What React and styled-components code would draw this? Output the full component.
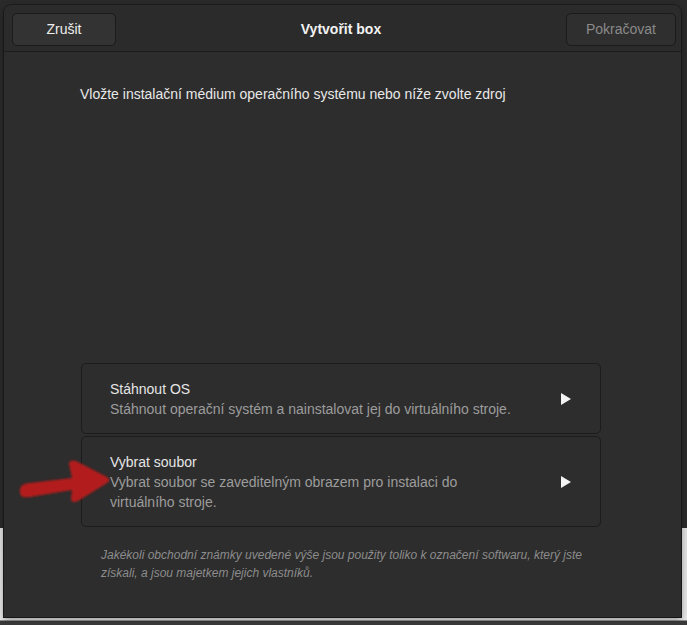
import React from "react";
import styled, { createGlobalStyle } from "styled-components";

const GlobalStyle = createGlobalStyle`
  html, body {
    margin: 0;
    padding: 0;
  }
  body {
    width: 687px;
    height: 625px;
    overflow: hidden;
    font-family: "Liberation Sans", Arial, sans-serif;
    background: linear-gradient(to bottom, #2a2a2a 0, #2a2a2a 528px, #dedede 528px, #e4e4e4 620px, #3a3a3a 621px);
  }
`;

const Dialog = styled.div`
  position: relative;
  margin: 5px 0 0 4px;
  width: 677px;
  height: 612px;
  display: flex;
  flex-direction: column;
  background: #2d2d2d;
  border-radius: 8px 8px 0 0;
  box-shadow: 0 2px 6px rgba(0, 0, 0, 0.4), 0 0 0 1px #1e1e1e;
  overflow: hidden;
`;

const HeaderBar = styled.div`
  height: 46px;
  flex-shrink: 0;
  display: flex;
  align-items: center;
  justify-content: space-between;
  padding: 0 5px 0 8px;
  background: #2b2b2b;
  border-bottom: 1px solid #1c1c1c;
`;

const HeaderButton = styled.button`
  height: 33px;
  width: ${(p) => p.$width}px;
  margin-top: 2px;
  border: 1px solid #1b1b1b;
  border-radius: 5px;
  background: ${(p) => (p.$disabled ? "#2f2f2f" : "#333333")};
  color: ${(p) => (p.$disabled ? "#8a8a8a" : "#eeeeee")};
  font-family: inherit;
  font-size: 14px;
  cursor: pointer;
`;

const Title = styled.div`
  color: #f2f2f2;
  font-weight: bold;
  font-size: 14px;
  margin-top: 2px;
`;

const Content = styled.div`
  flex: 1;
  display: flex;
  flex-direction: column;
  padding: 32px 0 35px 76px;
`;

const Intro = styled.p`
  margin: 0;
  color: #e8e8e8;
  font-size: 14px;
  line-height: 20px;
`;

const SourceList = styled.div`
  margin-top: auto;
  margin-left: 1px;
  width: 520px;
  display: flex;
  flex-direction: column;
  gap: 2px;
`;

const SourceCard = styled.div`
  display: flex;
  align-items: center;
  padding: 15px 29px 14px 28px;
  border: 1px solid #1c1c1c;
  border-radius: 5px;
  background: #2d2d2d;
`;

const CardText = styled.div`
  flex: 1;
  max-width: 408px;
`;

const CardTitle = styled.div`
  color: #e6e6e6;
  font-size: 14px;
  font-weight: normal;
  line-height: 20px;
`;

const CardSubtitle = styled.div`
  color: #9c9c9c;
  font-size: 14px;
  line-height: 20px;
`;

const Play = styled.div`
  margin-left: auto;
  width: 0;
  height: 0;
  border-top: 6px solid transparent;
  border-bottom: 6px solid transparent;
  border-left: 10px solid #f4f4f4;
`;

const Footer = styled.p`
  margin: 19px 0 0 21px;
  width: 495px;
  color: #8c8c8c;
  font-style: italic;
  font-size: 12px;
  line-height: 18px;
`;

const Annotation = styled.svg`
  position: absolute;
  left: 12px;
  top: 450px;
  pointer-events: none;
`;

const sources = [
  {
    title: "Stáhnout OS",
    text: "Stáhnout operační systém a nainstalovat jej do virtuálního stroje.",
  },
  {
    title: "Vybrat soubor",
    text: "Vybrat soubor se zaveditelným obrazem pro instalaci do virtuálního stroje.",
  },
];

export default function App() {
  return (
    <>
      <GlobalStyle />
      <Dialog>
        <HeaderBar>
          <HeaderButton $width={104}>Zrušit</HeaderButton>
          <Title>Vytvořit box</Title>
          <HeaderButton $width={110} $disabled>
            Pokračovat
          </HeaderButton>
        </HeaderBar>
        <Content>
          <Intro>Vložte instalační médium operačního systému nebo níže zvolte zdroj</Intro>
          <SourceList>
            {sources.map((s) => (
              <SourceCard key={s.title}>
                <CardText>
                  <CardTitle>{s.title}</CardTitle>
                  <CardSubtitle>{s.text}</CardSubtitle>
                </CardText>
                <Play />
              </SourceCard>
            ))}
          </SourceList>
          <Footer>
            Jakékoli obchodní známky uvedené výše jsou použity toliko k označení softwaru, který jste
            získali, a jsou majetkem jejich vlastníků.
          </Footer>
        </Content>
        <Annotation width="100" height="56" viewBox="0 0 100 56">
          <defs>
            <filter id="soft" x="-10%" y="-10%" width="120%" height="120%">
              <feGaussianBlur stdDeviation="1.2" />
            </filter>
          </defs>
          <path
            d="M4 37 C3 31 8 28 14 28 L56 23 L53 9 C53 5 57 5 60 6 L91 22 C94 24 94 26 91 28 L62 46 C58 48 55 47 55 44 L56 35 L14 42 C8 43 4 42 4 37 Z"
            fill="#b31c1e"
            filter="url(#soft)"
          />
        </Annotation>
      </Dialog>
    </>
  );
}
